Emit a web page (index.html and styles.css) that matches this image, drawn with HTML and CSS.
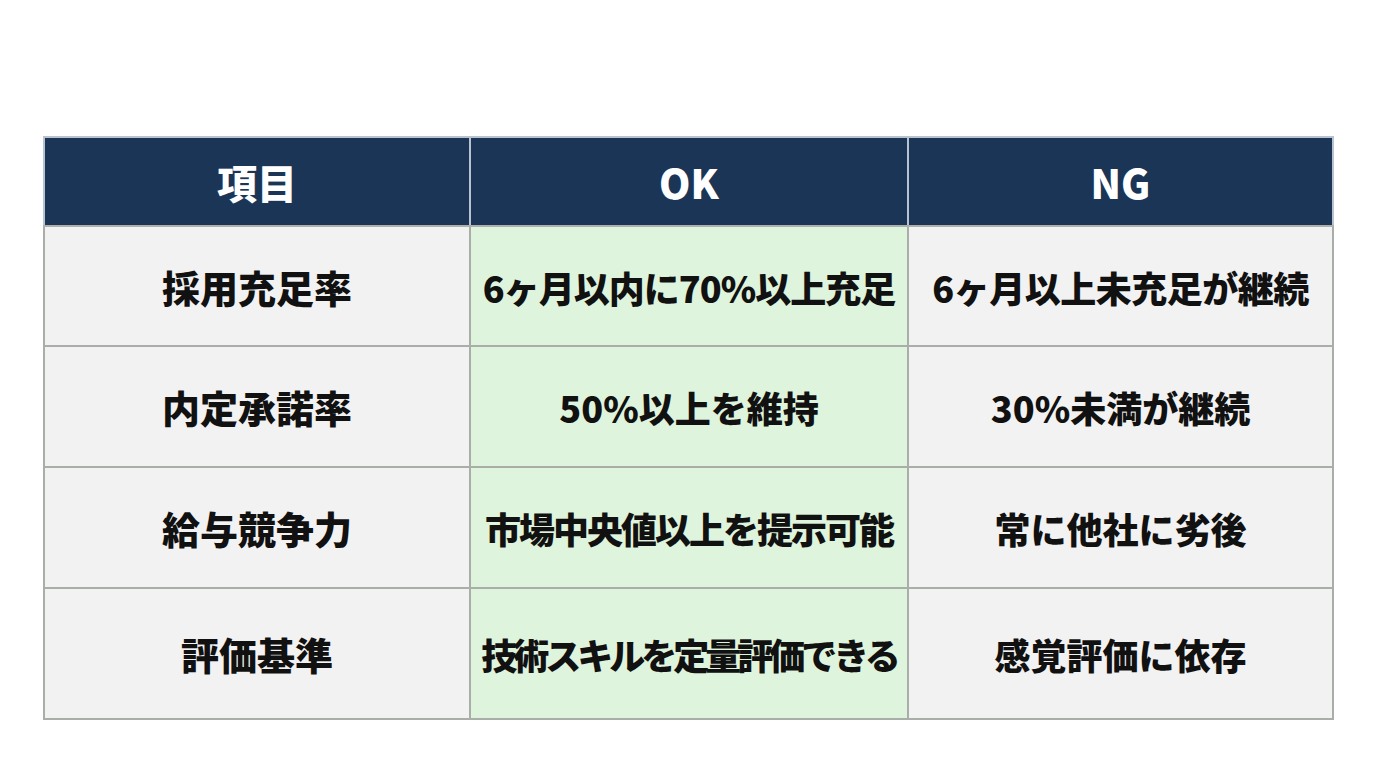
FILE: index.html
```html
<!DOCTYPE html>
<html lang="ja">
<head>
<meta charset="utf-8">
<link rel="stylesheet" href="styles.css">
</head>
<body>
<table class="cmp">
  <colgroup>
    <col class="c1"><col class="c2"><col class="c3">
  </colgroup>
  <thead>
    <tr class="head"><th>項目</th><th>OK</th><th>NG</th></tr>
  </thead>
  <tbody>
    <tr class="r1"><td class="item">採用充足率</td><td class="ok snug">6ヶ月以内に70%以上充足</td><td class="snugger">6ヶ月以上未充足が継続</td></tr>
    <tr class="r2"><td class="item">内定承諾率</td><td class="ok">50%以上を維持</td><td>30%未満が継続</td></tr>
    <tr class="r3"><td class="item">給与競争力</td><td class="ok tight">市場中央値以上を提示可能</td><td>常に他社に劣後</td></tr>
    <tr class="r4"><td class="item">評価基準</td><td class="ok tighter">技術スキルを定量評価できる</td><td>感覚評価に依存</td></tr>
  </tbody>
</table>
</body>
</html>
```
FILE: styles.css
```css
html, body {
  margin: 0;
  padding: 0;
  background: #ffffff;
}
body {
  padding: 136px 0 0 43px;
  font-family: "Noto Sans CJK JP", "Noto Sans", sans-serif;
}
.cmp {
  border-collapse: collapse;
  table-layout: fixed;
  width: 1289px;
  border: 2px solid #aeb0ae;
}
.c1 { width: 426px; }
.c2 { width: 438px; }
.c3 { width: 425px; }
.cmp th, .cmp td {
  padding: 0;
  text-align: center;
  vertical-align: middle;
  font-weight: 900;
  font-size: 36px;
  line-height: 1;
  white-space: nowrap;
}
.cmp th {
  background: #1b3556;
  color: #ffffff;
  border: 2px solid #b9c3cf;
  border-bottom-color: #aeb0ae;
  height: 87px;
  font-size: 40px;
}
.cmp td {
  background: #f2f2f2;
  color: #111111;
  border: 2px solid #a9aea9;
  padding-top: 1px;
}
.cmp td.item {
  font-size: 38px;
}
.cmp td.ok {
  background: #dff4dc;
}
.cmp td.snugger {
  letter-spacing: -0.5px;
}
.cmp td.snug {
  letter-spacing: -1px;
}
.cmp td.tight {
  letter-spacing: -2px;
}
.cmp td.tighter {
  letter-spacing: -4px;
}
.r1 td { height: 117px; }
.r2 td { height: 118px; }
.r3 td { height: 118px; }
.r4 td { height: 128px; }
```
